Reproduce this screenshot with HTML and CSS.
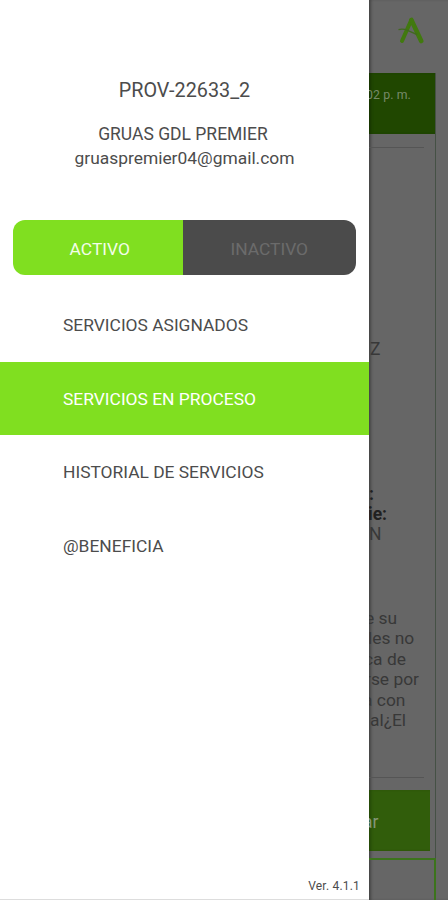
FILE: index.html
```html
<!DOCTYPE html>
<html lang="es">
<head>
<meta charset="utf-8">
<title>Servicios en proceso</title>
<link rel="stylesheet" href="styles.css">
</head>
<body>
<div class="screen">
  <aside class="drawer">
    <header class="profile">
      <div class="provider">PROV-22633_2</div>
      <div class="company">GRUAS GDL PREMIER</div>
      <div class="email">gruaspremier04@gmail.com</div>
    </header>
    <div class="toggle">
      <div class="on"><span>ACTIVO</span></div>
      <div class="off"><span>INACTIVO</span></div>
    </div>
    <nav class="menu">
      <a>SERVICIOS ASIGNADOS</a>
      <a class="selected">SERVICIOS EN PROCESO</a>
      <a>HISTORIAL DE SERVICIOS</a>
      <a>@BENEFICIA</a>
    </nav>
    <footer class="version">Ver. 4.1.1</footer>
  </aside>
  <main class="page">
    <header class="topbar">
      <svg class="logo" width="28" height="28" viewBox="0 0 28 28" fill="none">
        <path d="M4 25 13.3 4" stroke="#41790f" stroke-width="4" stroke-linecap="round"/>
        <path d="M13.4 4 23.2 25" stroke="#41790f" stroke-width="4.6" stroke-linecap="round"/>
        <path d="M0.5 13.6Q5 12.4 9.5 14.4T19 18.5" stroke="#41691f" stroke-width="1.4"/>
      </svg>
    </header>
    <section class="card">
      <div class="card-head">02 p. m.</div>
      <div class="card-body">
        <div class="rule"></div>
        <div class="name">Z</div>
        <div class="vehicle"><b>:</b><b class="series">ie:</b><span>N</span></div>
        <div class="notes">
          <span class="n1">e su</span><span class="n2">les no</span><span class="n3">ca de</span><span class="n4">rse por</span><span class="n5">a con</span><span class="n6">al¿El</span>
        </div>
        <div class="rule low"></div>
        <div class="button">ar</div>
      </div>
    </section>
    <section class="next-card"></section>
  </main>
</div>
</body>
</html>
```
FILE: styles.css
```css
* { box-sizing: border-box; }
body { margin: 0; font-family: Roboto, "Liberation Sans", sans-serif; color: #4c4c4c; }
.screen { display: flex; width: 448px; height: 900px; overflow: hidden; background: #666; }
.drawer { width: 369px; flex: none; background: #fff; display: flex; flex-direction: column; border-bottom: 1px solid #ddd; }
.profile { height: 220px; padding-top: 79px; text-align: center; white-space: nowrap; }
.provider { font-size: 19.8px; line-height: 24px; }
.company { font-size: 17.5px; line-height: 24px; margin-top: 19px; padding-right: 3px; }
.email { font-size: 17.4px; line-height: 24px; }
.toggle { display: flex; height: 55px; margin: 0 13px; border-radius: 12px; overflow: hidden; font-size: 17.4px; line-height: 58px; text-align: center; }
.on { width: 169.5px; background: #80df20; color: #f3fde9; padding-left: 4px; }
.off { flex: 1; background: #4b4b4b; color: #6b6b6b; }
.menu { padding-top: 13.4px; }
.menu a { display: block; height: 73.4px; padding-left: 63px; font-size: 17.4px; line-height: 75px; white-space: nowrap; }
.menu .selected { background: #80df20; color: #fff; }
.version { margin-top: auto; padding-right: 9px; text-align: right; font-size: 12px; line-height: 26px; letter-spacing: .2px; }
.page { flex: 1; display: flex; flex-direction: column; overflow: hidden; background: #666; box-shadow: inset 3px 0 3px -1px #444; color: #383838; }
.topbar { height: 73px; padding: 16px 0 0 29px; }
.logo { display: block; }
.card { width: 67px; height: 785px; border-right: 1px solid #455145; }
.card-head { height: 61px; padding-top: 14px; background: #204700; color: #778a69; font-size: 12.3px; line-height: 16px; white-space: nowrap; text-indent: -3px; letter-spacing: .1px; box-shadow: inset 3px 0 3px -1px #173300; }
.card-body { height: 724px; display: flex; flex-direction: column; white-space: nowrap; }
.rule { width: 55px; height: 1px; margin-top: 13px; background: #555; flex: none; }
.name { height: 20px; margin: 191px 0 0 1px; font-size: 17.5px; line-height: 20px; }
.vehicle { margin-top: 125px; display: flex; flex-direction: column; font-size: 17.5px; line-height: 20px; }
.vehicle b { color: #202020; }
.vehicle .series { margin-left: -1px; }
.notes { display: flex; flex-direction: column; margin-top: 64px; font-size: 17.4px; line-height: 20.4px; }
.n1 { margin-left: -4px; }
.n2 { margin-left: -1px; }
.n3 { margin-left: -5px; }
.n4 { margin-left: -4px; }
.n5 { margin-left: -6px; }
.n6 { margin-left: 1px; }
.low { margin-top: 47px; }
.button { width: 61px; height: 61px; margin-top: 12px; background: #315d0b; color: #849678; font-size: 17.5px; line-height: 64px; text-indent: -6px; box-shadow: inset 3px 0 3px -1px #244708; }
.next-card { width: 67px; flex: 1; border-top: 2px solid #3c741c; border-right: 2px solid #3c741c; }
```
